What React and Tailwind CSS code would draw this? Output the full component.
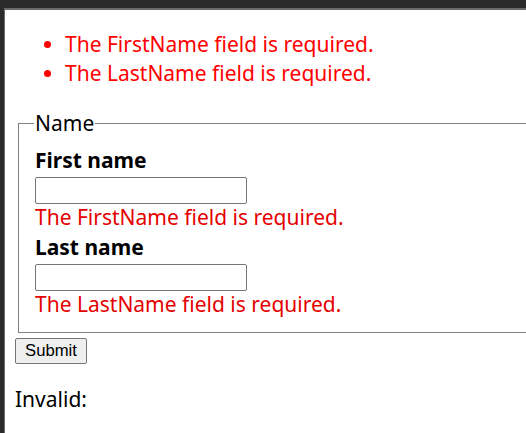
import React from "react";

const summary = ["The FirstName field is required.", "The LastName field is required."];

function Field({ label, message }) {
  return (
    <div className="flex flex-col items-start">
      <label className="font-bold leading-[27px]">{label}</label>
      <input
        type="text"
        className="mt-[3px] w-[212px] h-[27px] border border-[#767676] rounded-[2px] bg-white px-[3px] outline-none"
      />
      <div className="text-[#e50000] leading-[27px]">{message}</div>
    </div>
  );
}

export default function App() {
  return (
    <div className="w-[526px] h-[433px] overflow-hidden bg-[#2b2b2b] pt-[8px] pl-[4px]">
      <div className="h-full bg-white border-t-2 border-l border-[#6b6b6b] pl-[10px] text-[21px] text-black font-['Noto_Sans',sans-serif]">
        <ul className="mt-[20px] text-[#ff0000] leading-[29px]">
          {summary.map(s => (
            <li key={s} className="flex items-center">
              <span className="w-[7px] h-[7px] rounded-full bg-[#ff0000] ml-[29px] mr-[14px]" />
              {s}
            </li>
          ))}
        </ul>

        <fieldset className="mt-[22px] ml-[3px] w-[560px] border border-[#808080] pl-[16px] pb-[14px]">
          <legend className="ml-[-1px] px-[1px] leading-[27px]">Name</legend>
          <div className="mt-[10px] flex flex-col gap-[3px]">
            <Field label="First name" message="The FirstName field is required." />
            <Field label="Last name" message="The LastName field is required." />
          </div>
        </fieldset>

        <button className="mt-[4px] h-[26px] px-[9px] bg-[#efefef] border border-[#767676] rounded-[2px] text-[16.7px] leading-none font-['Liberation_Sans',Arial,sans-serif]">
          Submit
        </button>

        <div className="mt-[21px] leading-[27px]">Invalid:</div>
      </div>
    </div>
  );
}
